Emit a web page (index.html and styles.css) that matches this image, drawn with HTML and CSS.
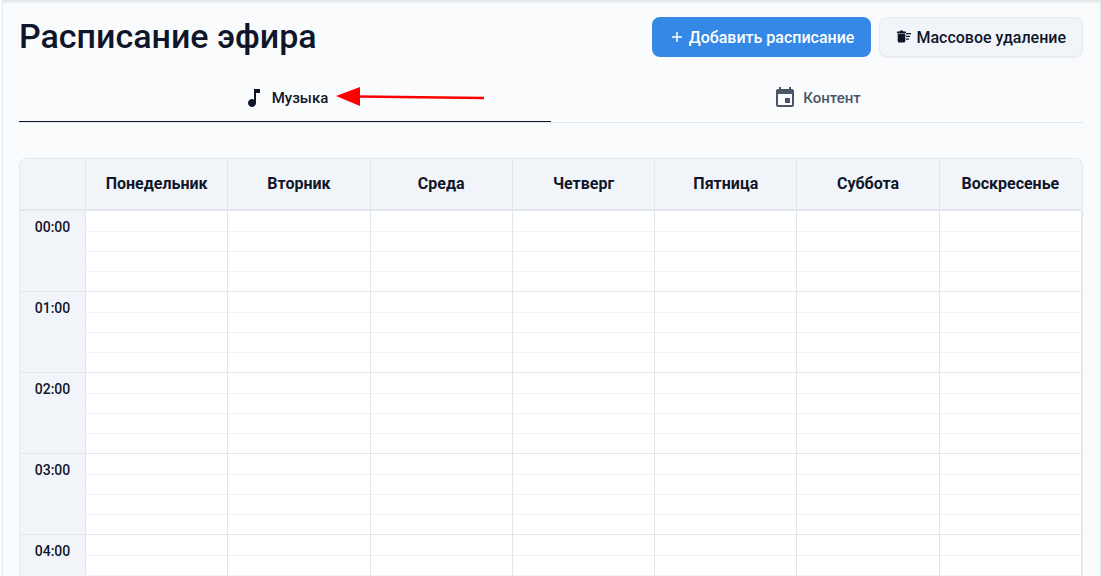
FILE: index.html
```html
<!DOCTYPE html>
<html lang="ru">
	<head>
		<meta charset="UTF-8">
		<meta name="viewport" content="width=device-width, initial-scale=1.0">
		<title>Расписание эфира</title>
		<link rel="stylesheet" href="styles.css">
	</head>
	<body>
		<main class="page">
			<header class="top">
				<h1>Расписание эфира</h1>
				<div class="actions">
					<button type="button" class="btn btn-add">
						<svg class="plus" viewBox="0 0 12 12" aria-hidden="true"><path d="M6 1v10M1 6h10"/></svg>
						Добавить расписание
					</button>
					<button type="button" class="btn btn-del">
						<svg class="trash" viewBox="0 0 16 14" aria-hidden="true"><path d="M1 1.500h2.500L4.300.5h2.400l.8 1H10V3H1zM1.700 3.500h7.600V11q0 1.500-1.500 1.500H3.200q-1.500 0-1.500-1.500zM10 3h5v1.300h-5zM10 5.700h4V7h-4zM10 8.400h3v1.300h-3z"/></svg>
						Массовое удаление
					</button>
				</div>
			</header>
			<div class="tabs" role="tablist">
				<button type="button" class="tab active" role="tab" aria-selected="true">
					<svg class="icon" viewBox="0 0 24 24" aria-hidden="true"><path d="M12 3v10.550c-.59-.34-1.270-.55-2-.55-2.210 0-4 1.790-4 4s1.790 4 4 4 4-1.790 4-4V7h4V3h-6z"/></svg>
					<span class="label">Музыка
						<svg class="arrow" viewBox="0 0 150 20" aria-hidden="true"><path class="line" d="M22 9.500L148 11"/><path class="head" d="M0 9L24 0V19z"/></svg>
					</span>
				</button>
				<button type="button" class="tab" role="tab" aria-selected="false">
					<svg class="icon" viewBox="0 0 24 24" aria-hidden="true"><path d="M17 12h-5v5h5v-5zM16 1v2H8V1H6v2H5c-1.110 0-1.990.9-1.990 2L3 19c0 1.100.89 2 2 2h14c1.100 0 2-.9 2-2V5c0-1.100-.9-2-2-2h-1V1h-2zm3 18H5V8h14v11z"/></svg>
					<span class="label">Контент</span>
				</button>
			</div>
			<div class="schedule">
				<table>
					<thead>
						<tr>
							<td class="corner"></td>
							<th scope="col">Понедельник</th>
							<th scope="col">Вторник</th>
							<th scope="col">Среда</th>
							<th scope="col">Четверг</th>
							<th scope="col">Пятница</th>
							<th scope="col">Суббота</th>
							<th scope="col">Воскресенье</th>
						</tr>
					</thead>
					<tbody>
						<tr><th scope="row">00:00</th><td></td><td></td><td></td><td></td><td></td><td></td><td></td></tr>
						<tr><th scope="row">01:00</th><td></td><td></td><td></td><td></td><td></td><td></td><td></td></tr>
						<tr><th scope="row">02:00</th><td></td><td></td><td></td><td></td><td></td><td></td><td></td></tr>
						<tr><th scope="row">03:00</th><td></td><td></td><td></td><td></td><td></td><td></td><td></td></tr>
						<tr><th scope="row">04:00</th><td></td><td></td><td></td><td></td><td></td><td></td><td></td></tr>
					</tbody>
				</table>
			</div>
		</main>
	</body>
</html>
```
FILE: styles.css
```css
*{
	box-sizing: border-box;
	margin: 0;
	padding: 0;
}
body{
	background: #f9fbfd;
	color: #10162a;
	font-family: Roboto, "Liberation Sans", sans-serif;
}
button{
	font-family: inherit;
	cursor: pointer;
}
.page{
	display: flex;
	flex-direction: column;
	height: 100vh;
	margin-left: 2px;
	padding: 16px 17px 0 16px;
	border-left: 1px solid #e4e8ee;
	border-right: 1px solid #e4e8ee;
	box-shadow: inset 0 4px 3px -2px #dfe2e6;
}
.top{
	display: flex;
	justify-content: space-between;
	align-items: flex-start;
}
h1{
	font-size: 34px;
	line-height: 40px;
	font-weight: 500;
}
.actions{
	display: flex;
	gap: 8px;
	padding-top: 1px;
}
.btn{
	display: flex;
	align-items: center;
	height: 40px;
	padding: 0 16px;
	border: 1px solid transparent;
	border-radius: 8px;
	font-size: 16px;
	font-weight: 500;
	white-space: nowrap;
}
.btn-add{
	gap: 6px;
	padding-left: 18px;
	background: #3588e5;
	color: #fff;
}
.btn-del{
	gap: 4px;
	background: #f1f5f9;
	border-color: #e6eaf0;
	color: #10162a;
	box-shadow: 0 1px 2px rgba(16,22,42,0.05);
}
.plus{
	width: 12px;
	height: 12px;
	fill: none;
	stroke: currentColor;
	stroke-width: 1.5;
}
.trash{
	width: 16px;
	height: 14px;
	fill: currentColor;
}
.tabs{
	display: flex;
	flex-shrink: 0;
	height: 50px;
	margin-top: 16px;
	border-bottom: 1px solid #e2e7ed;
}
.tab{
	flex: 1;
	display: flex;
	justify-content: center;
	align-items: center;
	gap: 6px;
	border: none;
	background: none;
	color: #4a5568;
	font-size: 15px;
	font-weight: 500;
}
.active{
	color: #10162a;
	box-shadow: inset 0 -1px #10162a;
}
.icon{
	width: 24px;
	height: 24px;
	fill: currentColor;
}
.label{
	position: relative;
}
.arrow{
	position: absolute;
	left: 100%;
	top: -2px;
	width: 150px;
	height: 20px;
	margin-left: 8px;
	overflow: visible;
}
.arrow .line{
	fill: none;
	stroke: #f00;
	stroke-width: 2.5;
}
.arrow .head{
	fill: #f00;
}
.schedule{
	flex: 1;
	min-height: 0;
	margin-top: 35px;
	border: 1px solid #e2e8ec;
	border-bottom: none;
	border-radius: 8px 8px 0 0;
	background: #fff;
	overflow: hidden;
}
table{
	width: 100%;
	table-layout: fixed;
	border-collapse: separate;
	border-spacing: 0;
}
th,
td{
	border-right: 1px solid #e0e6e9;
}
thead th,
.corner{
	height: 52px;
	padding-bottom: 2px;
	background: #f1f5f9;
	border-bottom: 2px solid #e2e8ec;
	font-size: 16px;
	font-weight: 700;
}
thead th:last-child{
	border-right-color: #f1f5f9;
}
.corner{
	width: 66px;
}
tbody th{
	padding-top: 7px;
	background: #f1f5f9;
	border-bottom: 1px solid #e0e6e9;
	font-size: 14px;
	line-height: 18px;
	font-weight: 500;
	vertical-align: top;
}
/* 15 minute slots inside every hour */
tbody td{
	height: 81px;
	border-bottom: 1px solid #e0e6e9;
	background: repeating-linear-gradient(#eff2f4 0, #eff2f4 1px, #fff 1px, #fff 20px) 0 20px no-repeat;
}
```
